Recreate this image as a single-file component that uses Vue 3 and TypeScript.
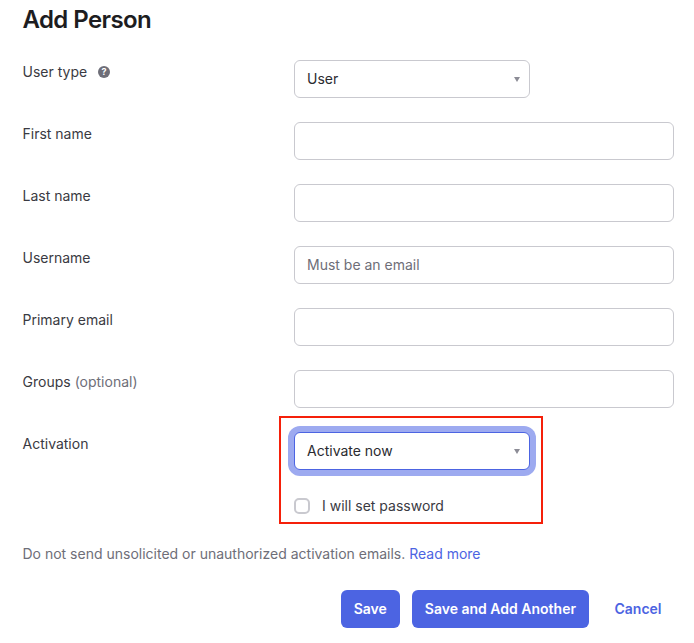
<script setup lang="ts">
interface Row { label: string; optional?: string; placeholder?: string }
const rows: Row[] = [
  { label: 'First name' },
  { label: 'Last name' },
  { label: 'Username', placeholder: 'Must be an email' },
  { label: 'Primary email' },
  { label: 'Groups', optional: '(optional)' },
]
</script>

<template>
  <div class="page">
    <h1 class="title">Add Person</h1>
    <div class="row">
      <div class="label">
        <span>User type</span>
        <svg class="help" viewBox="0 0 12 12" width="12" height="12" aria-hidden="true">
          <circle cx="6" cy="6" r="6" fill="#6e6e78" />
          <text x="6" y="9" text-anchor="middle" class="help-mark">?</text>
        </svg>
      </div>
      <div class="select short">
        <span>User</span>
        <i class="caret"></i>
      </div>
    </div>
    <div v-for="row in rows" :key="row.label" class="row">
      <div class="label">
        {{ row.label }} <span v-if="row.optional" class="optional">{{ row.optional }}</span>
      </div>
      <div class="input">
        <span v-if="row.placeholder" class="placeholder">{{ row.placeholder }}</span>
      </div>
    </div>
    <div class="row activation">
      <div class="label">Activation</div>
      <div class="activation-field">
        <div class="select focused">
          <span>Activate now</span>
          <i class="caret"></i>
        </div>
        <label class="check">
          <span class="box"></span>
          <span>I will set password</span>
        </label>
        <div class="highlight"></div>
      </div>
    </div>
    <p class="note">
      Do not send unsolicited or unauthorized activation emails.
      <a class="link">Read more</a>
    </p>
    <div class="actions">
      <button class="btn">Save</button>
      <button class="btn">Save and Add Another</button>
      <a class="cancel">Cancel</a>
    </div>
  </div>
</template>

<style scoped>
.page {
  width: 694px;
  height: 643px;
  box-sizing: border-box;
  padding: 0 20px 0 22.5px;
  overflow: hidden;
  font-family: Inter, "Noto Sans", sans-serif;
  font-size: 14px;
  line-height: 20px;
  color: #2b2b30;
  background: #fff;
}
.title {
  margin: 0 0 20px;
  height: 40px;
  font-size: 24px;
  line-height: 40px;
  font-weight: 600;
  letter-spacing: -0.6px;
  color: #1d1d21;
}
.row {
  display: grid;
  grid-template-columns: 271.5px 380px;
  margin-bottom: 24px;
}
.label {
  display: flex;
  align-items: flex-start;
  gap: 4px;
  padding-top: 2px;
  color: #3a3a42;
}
.optional {
  color: #6e6e78;
}
.help {
  margin: 4px 0 0 7px;
}
.help-mark {
  font-size: 9px;
  font-weight: 700;
  fill: #fff;
}
.input,
.select {
  box-sizing: border-box;
  height: 38px;
  display: flex;
  align-items: center;
  padding: 0 12px;
  border: 1px solid #c9c9cf;
  border-radius: 6px;
  background: #fff;
}
.select {
  justify-content: space-between;
  padding-right: 9px;
}
.short {
  width: 236px;
}
.caret {
  width: 0;
  height: 0;
  border-left: 3.5px solid transparent;
  border-right: 3.5px solid transparent;
  border-top: 5px solid #8c8c96;
}
.placeholder {
  color: #6e6e78;
}
.activation {
  margin-bottom: 0;
}
.activation-field {
  position: relative;
  height: 92px;
}
.focused {
  width: 236px;
  border-color: #4c64e2;
  box-shadow: 0 0 0 6px #9daaf0;
}
.check {
  display: flex;
  align-items: center;
  gap: 12px;
  margin-top: 26px;
  color: #3a3a42;
}
.box {
  box-sizing: border-box;
  width: 16px;
  height: 16px;
  border: 2px solid #c9c9cf;
  border-radius: 5px;
}
.highlight {
  position: absolute;
  left: -15px;
  top: -16px;
  width: 264px;
  height: 108px;
  box-sizing: border-box;
  border: 2px solid #f5200a;
  pointer-events: none;
}
.note {
  margin: 20px 0 0;
  color: #6e6e78;
}
.link,
.cancel {
  color: #4c64e2;
}
.actions {
  display: flex;
  justify-content: flex-end;
  align-items: center;
  gap: 12px;
  margin-top: 26px;
}
.btn {
  height: 38px;
  padding: 0 13px;
  border: 0;
  border-radius: 6px;
  background: #4c64e2;
  color: #fff;
  font: 600 14px/20px Inter, "Noto Sans", sans-serif;
}
.cancel {
  margin-left: 13.5px;
  margin-right: 12.5px;
  font-weight: 600;
}
</style>
